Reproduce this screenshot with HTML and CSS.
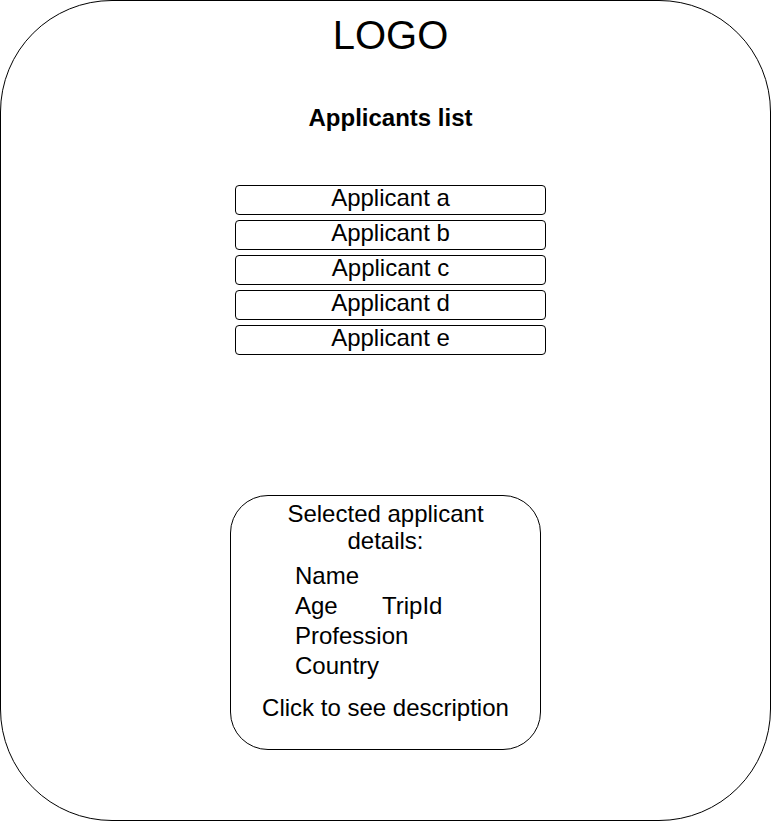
FILE: index.html
```html
<!DOCTYPE html>
<html lang="en">
<head>
  <meta charset="UTF-8">
  <title>Applicants</title>
  <meta name="viewport" content="width=device-width, initial-scale=1">
  <link rel="stylesheet" href="styles.css">
</head>
<body>
<div class="frame">
  <!-- HEADER + LIST -->
  <div class="top">
    <div class="logo">LOGO</div>
    <h1>Applicants list</h1>
    <ul class="applicants">
      <li class="applicant">Applicant a</li>
      <li class="applicant">Applicant b</li>
      <li class="applicant">Applicant c</li>
      <li class="applicant">Applicant d</li>
      <li class="applicant">Applicant e</li>
    </ul>
  </div>

  <!-- DETAILS -->
  <div class="details">
    <div class="details-title">Selected applicant details:</div>
    <div class="fields">
      <div>Name</div>
      <div class="field-row"><span class="age">Age</span><span>TripId</span></div>
      <div>Profession</div>
      <div>Country</div>
    </div>
    <div class="more">Click to see description</div>
  </div>
</div>
</body>
</html>
```

FILE: styles.css
```css
*{box-sizing:border-box;margin:0;padding:0}
body{font-family:'Liberation Sans',Arial,Helvetica,sans-serif;color:#000;background:#fff}
.frame{width:771px;height:821px;border:1px solid #000;border-radius:112px;padding-top:11px;display:flex;flex-direction:column;align-items:center}
.top{width:100%;padding-left:10px;display:flex;flex-direction:column;align-items:center}
.logo{font-size:40px;line-height:46px}
h1{font-size:24px;font-weight:700;line-height:28px;margin-top:46px}
.applicants{list-style:none;margin-top:53px;display:flex;flex-direction:column;gap:5px}
.applicant{width:311px;height:30px;border:1px solid #000;border-radius:4px;font-size:24px;line-height:24px;text-align:center}
.details{width:311px;height:255px;margin-top:140px;border:1px solid #000;border-radius:38px;padding-top:4px;font-size:24px;display:flex;flex-direction:column;align-items:center}
.details-title{width:220px;text-align:center;line-height:27px}
.fields{align-self:flex-start;margin:7px 0 0 64px;line-height:30px}
.field-row{display:flex}
.age{width:87px}
.more{margin-top:12px;line-height:30px}
```
